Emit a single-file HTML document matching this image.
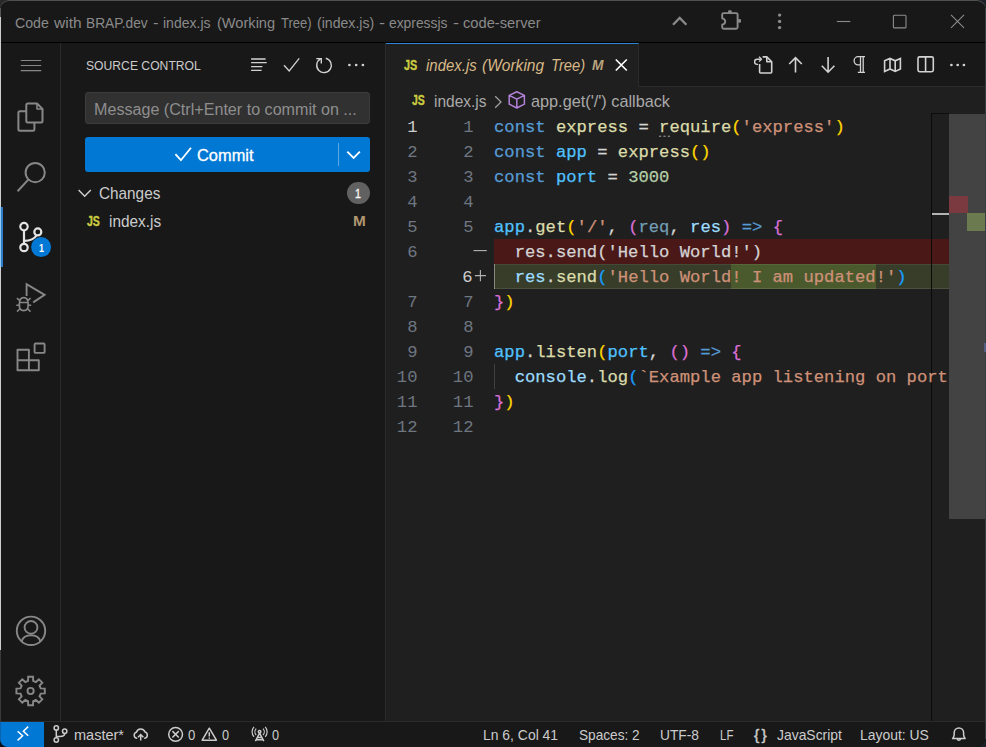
<!DOCTYPE html>
<html lang="en">
<head>
<meta charset="utf-8">
<title>Code with BRAP.dev - index.js (Working Tree) (index.js) - expressjs - code-server</title>
<style>
html,body{margin:0;padding:0;background:#1c2028;}
body{width:986px;height:747px;position:relative;overflow:hidden;font-family:"Liberation Sans",sans-serif;}
.abs{position:absolute;}
.t{position:absolute;white-space:pre;line-height:20px;height:20px;transform-origin:0 50%;font-family:"Liberation Sans",sans-serif;}
.ln{position:absolute;white-space:pre;height:25px;line-height:25px;text-align:right;font-family:"Liberation Mono",monospace;font-size:17.2px;}
.cl{position:absolute;left:494px;white-space:pre;height:25px;line-height:25px;font-family:"Liberation Mono",monospace;font-size:17.2px;color:#d4d4d4;letter-spacing:0px;-webkit-text-stroke:0.25px;}
svg{position:absolute;overflow:visible;}
</style>
</head>
<body>
<!-- window frame -->
<div class="abs" style="left:0;top:0;width:12px;height:12px;background:#2a2a2a;"></div>
<div class="abs" style="left:0;top:735px;width:12px;height:12px;background:#0b1018;"></div>
<div class="abs" id="win" style="left:0;top:0;width:986px;height:747px;background:#181818;border-radius:9px 9px 9px 9px;"></div>

<!-- title bar -->
<div class="abs" style="left:0;top:0;width:986px;height:42px;background:#181818;border-bottom:1px solid #000;border-radius:9px 9px 0 0;box-shadow:inset 0 1px 0 0 #505050;"></div>

<!-- activity bar -->
<div class="abs" style="left:0;top:43px;width:61px;height:678px;background:#181818;border-right:1px solid #2b2b2b;box-sizing:border-box;"></div>
<div class="abs" style="left:0px;top:207px;width:3px;height:60px;background:#2f7cc2;"></div>

<!-- side bar -->
<div class="abs" style="left:61px;top:43px;width:325px;height:678px;background:#181818;border-right:1px solid #2b2b2b;box-sizing:border-box;"></div>
<div class="abs" style="left:85px;top:92px;width:285px;height:32px;background:#313131;border:1px solid #3c3c3c;border-radius:3px;box-sizing:border-box;"></div>
<div class="abs" style="left:85px;top:137px;width:285px;height:34.6px;background:#0078d4;border-radius:3px;"></div>
<div class="abs" style="left:338px;top:143px;width:1px;height:23px;background:#5aa7e6;"></div>
<div class="abs" style="left:347px;top:181.6px;width:22.8px;height:22.8px;background:#616161;border-radius:11.4px;"></div>

<!-- editor area -->
<div class="abs" style="left:386px;top:43px;width:600px;height:678px;background:#1f1f1f;"></div>
<!-- tab strip -->
<div class="abs" style="left:386px;top:43px;width:600px;height:44px;background:#181818;border-bottom:1px solid #2b2b2b;box-sizing:border-box;"></div>
<div class="abs" style="left:386px;top:43px;width:253px;height:44px;background:#1f1f1f;border-top:1px solid #2f86d6;border-right:1px solid #2b2b2b;box-sizing:border-box;"></div>

<!-- diff line backgrounds -->
<div class="abs" style="left:494px;top:239px;width:455px;height:25px;background:#4b1818;"></div>
<div class="abs" style="left:494px;top:264px;width:455px;height:25px;background:#373d29;"></div>
<div class="abs" style="left:494px;top:264px;width:1.2px;height:25px;background:#85887a;"></div>
<div class="abs" style="left:731.4px;top:264px;width:144.4px;height:25px;background:#4b5a2d;"></div>
<div class="abs" style="left:494px;top:264px;width:455px;height:1px;background:rgba(255,255,255,0.07);"></div>
<div class="abs" style="left:494px;top:288px;width:455px;height:1px;background:rgba(255,255,255,0.10);"></div>
<!-- indent guide lines -->
<div class="abs" style="left:494px;top:364px;width:1px;height:25px;background:#404040;"></div>

<!-- overview ruler -->
<div class="abs" style="left:931.4px;top:113px;width:18px;height:1px;background:#0e0e0e;"></div>
<div class="abs" style="left:931.4px;top:113px;width:1px;height:608px;background:#0a0a0a;"></div>
<div class="abs" style="left:932.4px;top:213px;width:16.6px;height:2px;background:#b4b4b4;"></div>
<div class="abs" style="left:949px;top:113.5px;width:37px;height:405.5px;background:#434343;"></div>
<div class="abs" style="left:949px;top:196px;width:18.5px;height:17.2px;background:#7a3a3f;"></div>
<div class="abs" style="left:967px;top:213.2px;width:19px;height:17.6px;background:#6c7b4f;"></div>

<!-- status bar -->
<div class="abs" style="left:0;top:721px;width:986px;height:26px;background:#181818;border-top:1px solid #2b2b2b;box-sizing:border-box;border-radius:0 0 9px 9px;"></div>
<div class="abs" style="left:0;top:721.5px;width:44px;height:25.5px;background:#0078d4;border-radius:0 0 0 8px;"></div>

<svg class="abs" style="left:0;top:0" width="986" height="747" viewBox="0 0 986 747" fill="none" stroke-linecap="butt" stroke-linejoin="miter">
<!-- title bar icons -->
<g stroke="#8a8a8a" stroke-width="2.3">
  <path d="M673 24.8 L679.7 18 L686.4 24.8"/>
</g>
<g stroke="#8a8a8a" stroke-width="1.9" stroke-linejoin="round">
  <path d="M722.2 18.4 V14.6 Q722.2 13.1 723.7 13.1 H736.1 Q737.6 13.1 737.6 14.6 V27.3 Q737.6 28.8 736.1 28.8 H723.7 Q722.2 28.8 722.2 27.3 V24.8 Q725.2 24.2 725.2 21.6 Q725.2 19 722.2 18.4 Z"/>
</g>
<g fill="#8a8a8a">
  <rect x="728" y="10.2" width="3.8" height="3" rx="1.2"/>
  <rect x="738" y="19" width="3" height="3.8" rx="1.2"/>
</g>
<g fill="#8c8c8c">
  <circle cx="779.6" cy="15.1" r="1.7"/><circle cx="779.6" cy="21.4" r="1.7"/><circle cx="779.6" cy="27.6" r="1.7"/>
</g>
<g stroke="#8c8c8c" stroke-width="1.1">
  <path d="M836.8 21.5 H850.3"/>
  <rect x="893.4" y="15.3" width="12.6" height="12.6" rx="1"/>
  <path d="M951 14.9 L964 27.9 M964 14.9 L951 27.9"/>
</g>

<!-- activity bar -->
<g stroke="#878787" stroke-width="1.1">
  <path d="M20.8 60.5 H41.2 M20.8 65.5 H41.2 M20.8 70.6 H41.2"/>
</g>
<g stroke="#878787" stroke-width="2" stroke-linejoin="round">
  <!-- files -->
  <path d="M26.3 110.5 V105 Q26.3 103.5 27.8 103.5 H37 L42.5 109 V120.9 Q42.5 122.4 41 122.4 H27.8 Q26.3 122.4 26.3 120.9 Z"/>
  <path d="M37 103.5 V109 H42.5" stroke-width="1.6"/>
  <path d="M26.3 111.2 H19.9 Q18.4 111.2 18.4 112.7 V129.3 Q18.4 130.8 19.9 130.8 H32.9 Q34.4 130.8 34.4 129.3 V122.4"/>
  <!-- search -->
  <circle cx="35.2" cy="172.6" r="9.6"/>
  <path d="M28.3 179.6 L17.6 191.2"/>
</g>
<!-- scm -->
<g stroke="#e4e4e4" stroke-width="2.2">
  <circle cx="24" cy="226.6" r="3.7"/>
  <circle cx="37.8" cy="231.9" r="3.5"/>
  <circle cx="24" cy="247.5" r="3.7"/>
  <path d="M24 230.3 V243.8"/>
  <path d="M36.6 235.2 Q33.5 240.6 24 240.9"/>
</g>
<circle cx="41.1" cy="247.1" r="10" fill="#0078d4"/>
<!-- debug -->
<g stroke="#878787" stroke-width="1.9" stroke-linejoin="miter">
  <path d="M26.6 296 V284.2 L44.6 294.9 L33.2 302.4"/>
  <path d="M19.4 303.4 Q19.4 297.7 23.75 297.7 Q28.1 297.7 28.1 303.4 V306 Q28.1 310.6 23.75 310.6 Q19.4 310.6 19.4 306 Z" stroke-width="1.7"/>
  <path d="M19.4 302.6 H28.1 M19.4 305.2 H16.3 M28.1 305.2 H31.2 M19.8 300.6 L16.9 298.2 M27.7 300.6 L30.6 298.2 M19.9 308.8 L17 311.6 M27.6 308.8 L30.5 311.6" stroke-width="1.5"/>
</g>
<!-- extensions -->
<g stroke="#878787" stroke-width="1.9" stroke-linejoin="round">
  <path d="M17.5 349.7 H28.9 V360.3 H38.8 V370.2 H17.5 Z M17.5 360.3 H28.9 V370.2"/>
  <rect x="34.6" y="343.5" width="10" height="9.4" rx="1"/>
</g>
<!-- account -->
<g stroke="#878787" stroke-width="1.9">
  <circle cx="31" cy="630.8" r="14.2"/>
  <circle cx="31" cy="627.4" r="6.4"/>
  <path d="M21.6 641.2 Q23.5 635.2 31 635.2 Q38.5 635.2 40.4 641.2"/>
</g>
<!-- gear -->
<g stroke="#878787" stroke-width="1.9" stroke-linejoin="miter">
  <path id="gearpath" d="M28.03 680.92 L28.16 676.81 L33.04 676.81 L33.17 680.92 L35.91 682.06 L38.91 679.24 L42.36 682.69 L39.54 685.69 L40.68 688.43 L44.79 688.56 L44.79 693.44 L40.68 693.57 L39.54 696.31 L42.36 699.31 L38.91 702.76 L35.91 699.94 L33.17 701.08 L33.04 705.19 L28.16 705.19 L28.03 701.08 L25.29 699.94 L22.29 702.76 L18.84 699.31 L21.66 696.31 L20.52 693.57 L16.41 693.44 L16.41 688.56 L20.52 688.43 L21.66 685.69 L18.84 682.69 L22.29 679.24 L25.29 682.06 Z"/>
  <circle cx="30.6" cy="691" r="3.1"/>
</g>

<!-- sidebar header icons -->
<g stroke="#d2d2d2" stroke-width="1.3">
  <path d="M251.1 59 H265.6 M251.1 62.7 H266.7 M251.1 66.6 H262.4 M251.1 70.3 H261.6"/>
  <path d="M284 65.2 L289.2 71 L299.2 58.4"/>
  <path d="M320.5 58.9 A7.3 7.3 0 1 0 325.8 58.2" stroke-width="1.4"/>
  <path d="M316.3 58.6 H321.3 V63.4" stroke-width="1.4"/>
</g>
<g fill="#d2d2d2">
  <circle cx="349.4" cy="65" r="1.35"/><circle cx="356.2" cy="65" r="1.35"/><circle cx="362.9" cy="65" r="1.35"/>
</g>
<!-- commit button -->
<g stroke="#ffffff" stroke-width="1.8">
  <path d="M175.4 154.2 L180.9 160.2 L191 147.8"/>
  <path d="M347.3 151.6 L353.6 158 L359.9 151.6"/>
</g>
<!-- changes chevron -->
<g stroke="#cccccc" stroke-width="1.5">
  <path d="M78.6 190 L84.7 196.2 L90.8 190"/>
</g>

<!-- tab close -->
<g stroke="#ffffff" stroke-width="1.7">
  <path d="M615.8 59.5 L626.8 70.5 M626.8 59.5 L615.8 70.5"/>
</g>
<!-- editor actions -->
<g stroke="#d2d2d2" stroke-width="1.6" stroke-linejoin="round">
  <!-- go to file -->
  <path d="M759.6 64 V72 Q759.6 73 760.6 73 H770.7 Q771.7 73 771.7 72 V61.8 L766.8 56.9 H762.6"/>
  <path d="M766.8 56.9 V61.8 H771.7"/>
  <path d="M760.6 59.2 H757.2 A2.6 2.6 0 0 0 757.2 64.4 H758" stroke-width="1.4"/>
  <path d="M759 56.8 L761.5 59.2 L759 61.6" stroke-width="1.3"/>
  <!-- arrows -->
  <path d="M795.5 72.6 V57.6 M789.2 64 L795.5 57.6 L801.8 64" stroke-linejoin="miter"/>
  <path d="M828.1 57.1 V72.2 M821.8 65.8 L828.1 72.2 L834.4 65.8" stroke-linejoin="miter"/>
  <!-- pilcrow -->
  <path d="M865 56.7 H858.2 A4.1 4.1 0 0 0 858.2 64.9 H860.4 M860.5 56.7 V72.3 M863.2 56.7 V72.3 M857.8 72.3 H865" stroke-width="1.3"/>
  <!-- map -->
  <path d="M884.6 60.8 L890 58.4 L895.2 60.8 L900.4 58.4 V69 L895.2 71.4 L890 69 L884.6 71.4 Z M890 58.4 V69 M895.2 60.8 V71.4" stroke-linejoin="miter"/>
  <!-- split -->
  <rect x="918" y="56.9" width="15.3" height="14.8" rx="1.6"/>
  <path d="M925.6 56.9 V71.7"/>
</g>
<g fill="#d2d2d2">
  <circle cx="951.4" cy="65" r="1.35"/><circle cx="957.7" cy="65" r="1.35"/><circle cx="963.9" cy="65" r="1.35"/>
</g>
<!-- breadcrumb chevron + cube -->
<g stroke="#a0a0a0" stroke-width="1.3">
  <path d="M495.2 96.3 L501 102 L495.2 107.7"/>
</g>
<g stroke="#b180d7" stroke-width="1.5" stroke-linejoin="round">
  <path d="M516.8 91.8 L524.4 95.4 V104.2 L516.8 108 L509.2 104.2 V95.4 Z M509.2 95.4 L516.8 99.2 L524.4 95.4 M516.8 99.2 V108"/>
</g>

<!-- diff markers -->
<g stroke="#b4b4b4" stroke-width="1.1">
  <path d="M473.5 250.6 H486.8"/>
  <path d="M474.9 275.6 H485.9 M480.4 269.9 V281.3"/>
</g>
<g fill="#7f7f7f">
  <rect x="659" y="135.6" width="2.2" height="1.4"/><rect x="663.4" y="135.6" width="2.2" height="1.4"/><rect x="667.8" y="135.6" width="2.2" height="1.4"/>
</g>
<!-- status bar icons -->
<g stroke="#ffffff" stroke-width="1.5">
  <path d="M17.6 731.2 L22.6 735.8 L17.6 740.4 M28.2 726.6 L23.4 731.2 L28.2 735.8"/>
</g>
<g stroke="#cccccc" stroke-width="1.5">
  <circle cx="56.3" cy="727.9" r="2.2"/><circle cx="56.3" cy="740" r="2.2"/><circle cx="64.7" cy="731.2" r="2.2"/>
  <path d="M56.3 730.1 V737.8 M64.7 733.4 Q64.7 736.4 60 736.4 H56.3"/>
  <!-- cloud upload -->
  <path d="M137.2 738.2 H136.6 A3.1 3.1 0 0 1 136.4 732.2 A4.5 4.5 0 0 1 145 732 A3.2 3.2 0 0 1 144.8 738.2 H144.2"/>
  <path d="M140.7 740.6 V734.6 M138 737.2 L140.7 734.5 L143.4 737.2"/>
  <!-- error -->
  <circle cx="175.6" cy="734.3" r="6.9"/>
  <path d="M172.4 731.1 L178.8 737.5 M178.8 731.1 L172.4 737.5"/>
  <!-- warning -->
  <path d="M209.3 728.2 L216.4 740.2 H202.2 Z" stroke-linejoin="round"/>
  <path d="M209.3 732.2 V736.6 M209.3 737.6 V738.8"/>
  <!-- radio tower -->
  <path d="M259.6 733.2 L255.4 741.2 M259.6 733.2 L263.8 741.2 M257.4 737.4 H261.8 M256.2 739.8 H263"/>
  <circle cx="259.6" cy="731.8" r="1.3"/>
  <path d="M256.2 728.6 A4.6 4.6 0 0 0 256.2 735 M263 728.6 A4.6 4.6 0 0 1 263 735 M254 726.8 A7.4 7.4 0 0 0 254 736.8 M265.2 726.8 A7.4 7.4 0 0 1 265.2 736.8" stroke-width="1.2"/>
  <!-- bell -->
  <path d="M952.6 738.6 H965.2 Q963.6 736.6 963.6 734.6 V732.6 A4.7 4.7 0 0 0 954.2 732.6 V734.6 Q954.2 736.6 952.6 738.6 Z" stroke-linejoin="round"/>
  <path d="M957.2 739 A1.8 1.8 0 0 0 960.6 739"/>
</g>
</svg>


<span class="t" style="left:14.9px;top:13.20px;font-size:15.2px;color:#8a8a8a;transform:scaleX(0.9308)">Code </span>
<span class="t" style="left:53.5px;top:13.20px;font-size:15.2px;color:#8a8a8a;transform:scaleX(1.0216)">with </span>
<span class="t" style="left:86.3px;top:13.20px;font-size:15.2px;color:#8a8a8a;transform:scaleX(0.9059)">BRAP.dev </span>
<span class="t" style="left:152.7px;top:13.20px;font-size:15.2px;color:#8a8a8a;transform:scaleX(1.0864)">- </span>
<span class="t" style="left:163.3px;top:13.20px;font-size:15.2px;color:#8a8a8a;transform:scaleX(0.9243)">index.js </span>
<span class="t" style="left:216.9px;top:13.20px;font-size:15.2px;color:#8a8a8a;transform:scaleX(0.9606)">(Working </span>
<span class="t" style="left:280.6px;top:13.20px;font-size:15.2px;color:#8a8a8a;transform:scaleX(0.8591)">Tree) </span>
<span class="t" style="left:316.5px;top:13.20px;font-size:15.2px;color:#8a8a8a;transform:scaleX(0.9282)">(index.js) </span>
<span class="t" style="left:378.9px;top:13.20px;font-size:15.2px;color:#8a8a8a;transform:scaleX(1.2049)">- </span>
<span class="t" style="left:388.9px;top:13.20px;font-size:15.2px;color:#8a8a8a;transform:scaleX(0.9103)">expressjs </span>
<span class="t" style="left:452.5px;top:13.20px;font-size:15.2px;color:#8a8a8a;transform:scaleX(1.2049)">- </span>
<span class="t" style="left:462.5px;top:13.20px;font-size:15.2px;color:#8a8a8a;transform:scaleX(0.9677)">code-server </span>
<span class="t" style="left:86.4px;top:55.80px;font-size:13.4px;color:#cccccc;transform:scaleX(0.9076)">SOURCE CONTROL</span>
<span class="t" style="left:94px;top:100.00px;font-size:15.6px;color:#8e8e8e;transform:scaleX(1.0332)">Message (Ctrl+Enter to commit on ...</span>
<span class="t" style="left:197.3px;top:145.80px;font-size:15.7px;color:#ffffff;-webkit-text-stroke:0.3px #fff;transform:scaleX(1.0454)">Commit</span>
<span class="t" style="left:98.5px;top:183.80px;font-size:15.7px;color:#cccccc;transform:scaleX(0.9762)">Changes</span>
<span class="t" style="left:355.2px;top:183.80px;font-size:13.3px;color:#f8f8f8;-webkit-text-stroke:0.35px #f8f8f8;transform:scaleX(0.7966)">1</span>
<span class="t" style="left:108.7px;top:211.60px;font-size:15.9px;color:#cccccc;transform:scaleX(0.9668)">index.js</span>
<span class="t" style="left:353px;top:211.00px;font-size:14.6px;color:#b09670;font-weight:bold;transform:scaleX(1.0516)">M</span>
<span class="t" style="left:86.6px;top:210.50px;font-size:14px;color:#cbcb41;font-weight:bold;-webkit-text-stroke:0.4px;transform:scaleX(0.7533)">JS</span>
<span class="t" style="left:38.5px;top:238.10px;font-size:11px;color:#ffffff;font-weight:bold;transform:scaleX(0.8163)">1</span>
<span class="t" style="left:404px;top:54.60px;font-size:14px;color:#cbcb41;font-weight:bold;-webkit-text-stroke:0.4px;transform:scaleX(0.7708)">JS</span>
<span class="t" style="left:426.4px;top:55.80px;font-size:15.9px;color:#d8b886;font-style:italic;transform:scaleX(0.9408)">index.js </span>
<span class="t" style="left:482.2px;top:55.80px;font-size:15.9px;color:#d8b886;font-style:italic;transform:scaleX(0.9768)">(Working </span>
<span class="t" style="left:550.7px;top:55.80px;font-size:15.9px;color:#d8b886;font-style:italic;transform:scaleX(0.9294)">Tree)</span>
<span class="t" style="left:591.9px;top:55.10px;font-size:15.4px;color:#b8a37e;font-style:italic;font-weight:bold;transform:scaleX(0.8965)">M</span>
<span class="t" style="left:412px;top:90.40px;font-size:14px;color:#cbcb41;font-weight:bold;-webkit-text-stroke:0.4px;transform:scaleX(0.7474)">JS</span>
<span class="t" style="left:433.5px;top:91.80px;font-size:15.9px;color:#a9a9a9;transform:scaleX(0.9742)">index.js</span>
<span class="t" style="left:530.5px;top:91.80px;font-size:15.9px;color:#a9a9a9;transform:scaleX(1.0226)">app.get(&#x27;/&#x27;) callback</span>
<span class="t" style="left:73.5px;top:725.30px;font-size:15px;color:#cccccc;transform:scaleX(0.9674)">master*</span>
<span class="t" style="left:188.3px;top:725.30px;font-size:15px;color:#cccccc;transform:scaleX(0.8749)">0</span>
<span class="t" style="left:222.3px;top:725.30px;font-size:15px;color:#cccccc;transform:scaleX(0.8509)">0</span>
<span class="t" style="left:272.2px;top:725.30px;font-size:15px;color:#cccccc;transform:scaleX(0.8509)">0</span>
<span class="t" style="left:482.7px;top:725.30px;font-size:15px;color:#cccccc;transform:scaleX(0.9284)">Ln 6, Col 41</span>
<span class="t" style="left:579.4px;top:725.30px;font-size:15px;color:#cccccc;transform:scaleX(0.9098)">Spaces: 2</span>
<span class="t" style="left:660.4px;top:725.30px;font-size:15px;color:#cccccc;transform:scaleX(0.9176)">UTF-8</span>
<span class="t" style="left:720.4px;top:725.30px;font-size:15px;color:#cccccc;transform:scaleX(0.7650)">LF</span>
<span class="t" style="left:754px;top:724.60px;font-size:15px;color:#cccccc;letter-spacing:2px;-webkit-text-stroke:0.4px;transform:scaleX(1.0548)">{}</span>
<span class="t" style="left:777.2px;top:725.30px;font-size:15px;color:#cccccc;transform:scaleX(0.9267)">JavaScript</span>
<span class="t" style="left:860.3px;top:725.30px;font-size:15px;color:#cccccc;transform:scaleX(0.9283)">Layout: US</span>

<span class="ln" style="top:114.5px;left:386px;width:31.5px;color:#cccccc">1</span>
<span class="ln" style="top:114.5px;left:440px;width:33.5px;color:#6e7681">1</span>
<span class="cl" style="top:114.5px"><span style="color:#569cd6">const</span> <span style="color:#dcdcaa">express</span><span style="color:#d4d4d4"> = </span><span style="color:#dcdcaa">require</span><span style="color:#ffd700">(</span><span style="color:#ce9178">&#x27;express&#x27;</span><span style="color:#ffd700">)</span></span>
<span class="ln" style="top:139.5px;left:386px;width:31.5px;color:#6e7681">2</span>
<span class="ln" style="top:139.5px;left:440px;width:33.5px;color:#6e7681">2</span>
<span class="cl" style="top:139.5px"><span style="color:#569cd6">const</span> <span style="color:#4fc1ff">app</span><span style="color:#d4d4d4"> = </span><span style="color:#dcdcaa">express</span><span style="color:#ffd700">()</span></span>
<span class="ln" style="top:164.5px;left:386px;width:31.5px;color:#6e7681">3</span>
<span class="ln" style="top:164.5px;left:440px;width:33.5px;color:#6e7681">3</span>
<span class="cl" style="top:164.5px"><span style="color:#569cd6">const</span> <span style="color:#4fc1ff">port</span><span style="color:#d4d4d4"> = </span><span style="color:#b5cea8">3000</span></span>
<span class="ln" style="top:189.5px;left:386px;width:31.5px;color:#6e7681">4</span>
<span class="ln" style="top:189.5px;left:440px;width:33.5px;color:#6e7681">4</span>
<span class="ln" style="top:214.5px;left:386px;width:31.5px;color:#6e7681">5</span>
<span class="ln" style="top:214.5px;left:440px;width:33.5px;color:#6e7681">5</span>
<span class="cl" style="top:214.5px"><span style="color:#4fc1ff">app</span><span style="color:#d4d4d4">.</span><span style="color:#dcdcaa">get</span><span style="color:#ffd700">(</span><span style="color:#ce9178">&#x27;/&#x27;</span><span style="color:#d4d4d4">, </span><span style="color:#da70d6">(</span><span style="color:#729db4">req</span><span style="color:#d4d4d4">, </span><span style="color:#9cdcfe">res</span><span style="color:#da70d6">)</span><span style="color:#569cd6"> =&gt; </span><span style="color:#da70d6">{</span></span>
<span class="ln" style="top:239.5px;left:386px;width:31.5px;color:#6e7681">6</span>
<span class="cl" style="top:239.5px"><span style="color:#d4d4d4">  res.send(&#x27;Hello World!&#x27;)</span></span>
<span class="ln" style="top:264.5px;left:440px;width:32.5px;color:#cccccc">6</span>
<span class="cl" style="top:264.5px">  <span style="color:#9cdcfe">res</span><span style="color:#d4d4d4">.</span><span style="color:#dcdcaa">send</span><span style="color:#179fff">(</span><span style="color:#ce9178">&#x27;Hello World! I am updated!&#x27;</span><span style="color:#179fff">)</span></span>
<span class="ln" style="top:289.5px;left:386px;width:31.5px;color:#6e7681">7</span>
<span class="ln" style="top:289.5px;left:440px;width:33.5px;color:#6e7681">7</span>
<span class="cl" style="top:289.5px"><span style="color:#da70d6">}</span><span style="color:#ffd700">)</span></span>
<span class="ln" style="top:314.5px;left:386px;width:31.5px;color:#6e7681">8</span>
<span class="ln" style="top:314.5px;left:440px;width:33.5px;color:#6e7681">8</span>
<span class="ln" style="top:339.5px;left:386px;width:31.5px;color:#6e7681">9</span>
<span class="ln" style="top:339.5px;left:440px;width:33.5px;color:#6e7681">9</span>
<span class="cl" style="top:339.5px"><span style="color:#4fc1ff">app</span><span style="color:#d4d4d4">.</span><span style="color:#dcdcaa">listen</span><span style="color:#ffd700">(</span><span style="color:#4fc1ff">port</span><span style="color:#d4d4d4">, </span><span style="color:#da70d6">()</span><span style="color:#569cd6"> =&gt; </span><span style="color:#da70d6">{</span></span>
<span class="ln" style="top:364.5px;left:386px;width:31.5px;color:#6e7681">10</span>
<span class="ln" style="top:364.5px;left:440px;width:33.5px;color:#6e7681">10</span>
<span class="cl" style="top:364.5px">  <span style="color:#9cdcfe">console</span><span style="color:#d4d4d4">.</span><span style="color:#dcdcaa">log</span><span style="color:#179fff">(</span><span style="color:#ce9178">`Example app listening on port</span></span>
<span class="ln" style="top:389.5px;left:386px;width:31.5px;color:#6e7681">11</span>
<span class="ln" style="top:389.5px;left:440px;width:33.5px;color:#6e7681">11</span>
<span class="cl" style="top:389.5px"><span style="color:#da70d6">}</span><span style="color:#ffd700">)</span></span>
<span class="ln" style="top:414.5px;left:386px;width:31.5px;color:#6e7681">12</span>
<span class="ln" style="top:414.5px;left:440px;width:33.5px;color:#6e7681">12</span>

<!-- window edges -->
<div class="abs" style="left:0;top:8px;width:1px;height:9px;background:#555;"></div>
<div class="abs" style="left:0;top:650px;width:1px;height:71.5px;background:#3a3a3a;"></div>
<div class="abs" style="left:0;top:721.5px;width:1px;height:18px;background:#0b62b0;"></div>
<div class="abs" style="left:0;top:17px;width:1.1px;height:633px;background:#cfcfcf;"></div>
<div class="abs" style="left:0;top:207px;width:1.1px;height:60px;background:#93c9f9;"></div>
<div class="abs" style="left:984.8px;top:8px;width:1.2px;height:731px;background:#3a3e44;"></div>
<div class="abs" style="left:984px;top:343px;width:2px;height:9px;background:#5a6aa0;opacity:.7"></div>
</body>
</html>
